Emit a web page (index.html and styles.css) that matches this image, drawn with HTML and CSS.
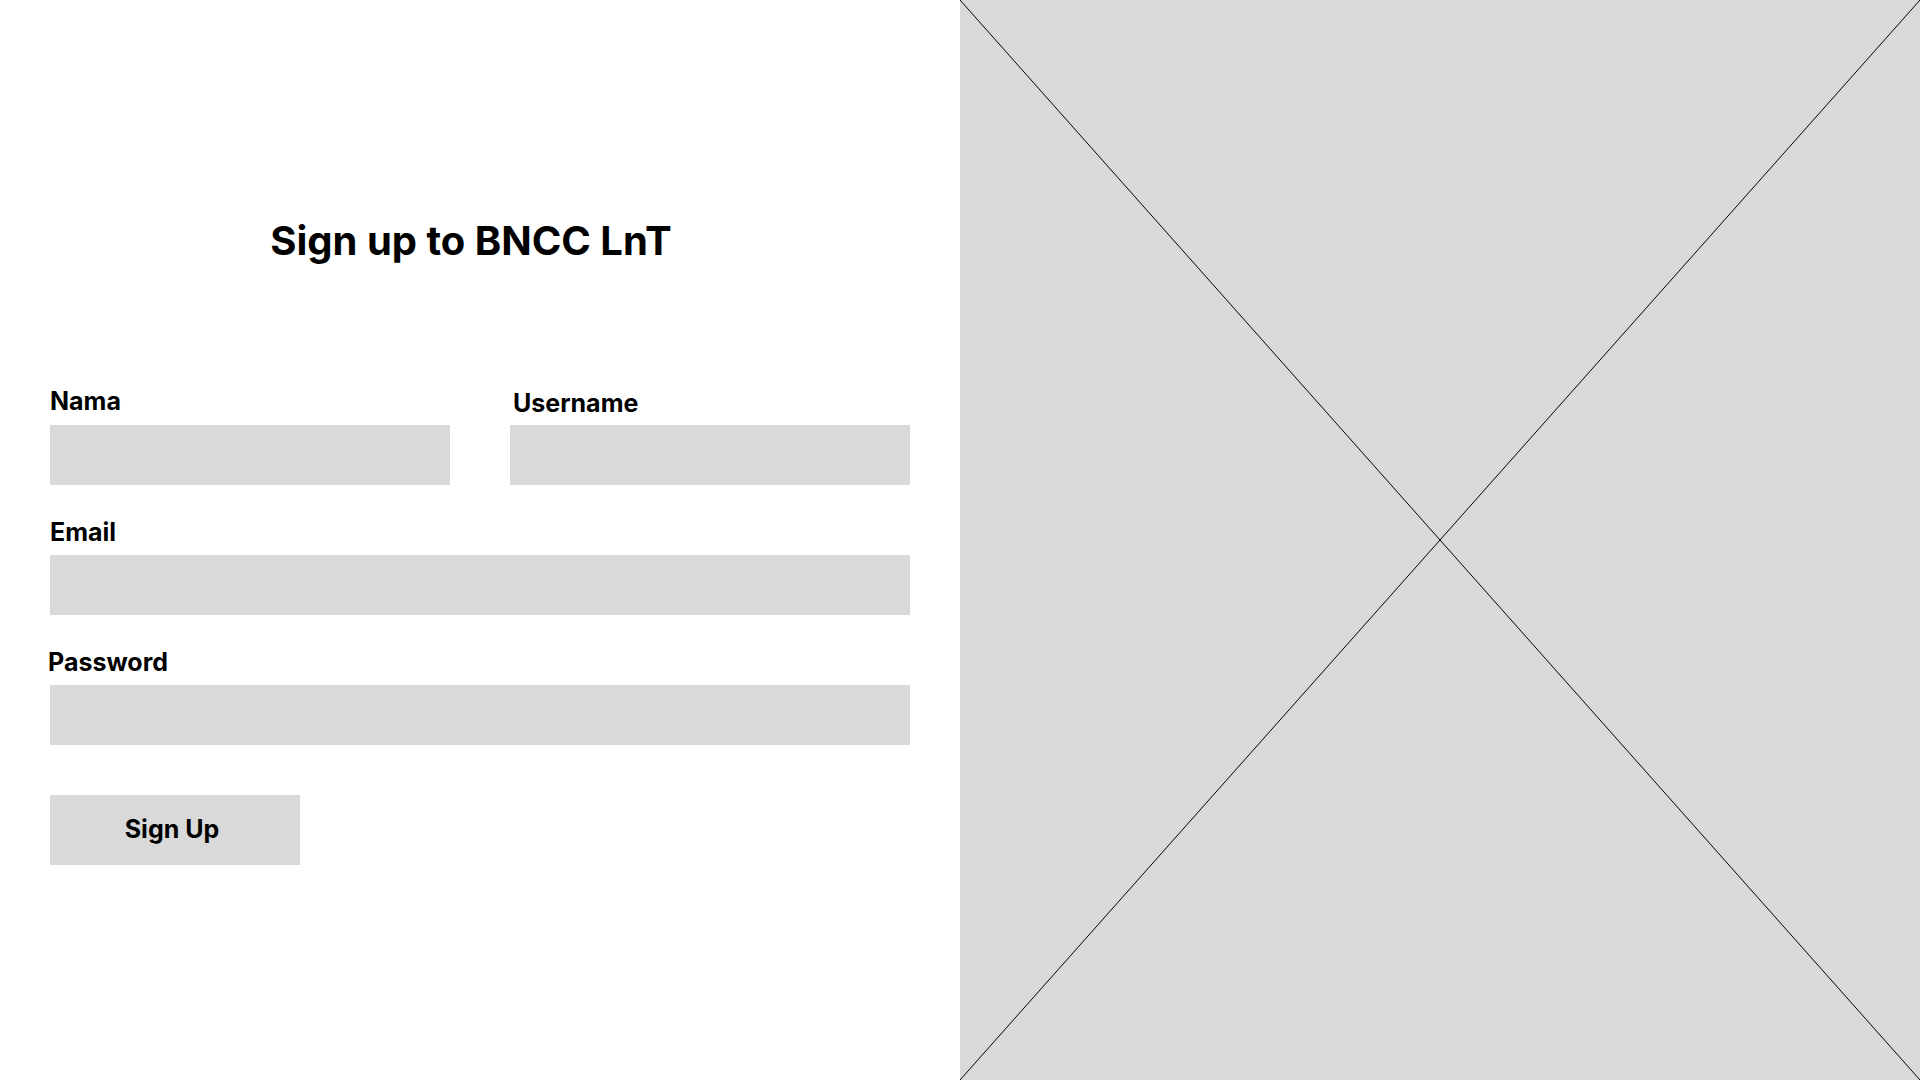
FILE: index.html
```html
<!DOCTYPE html>
<html lang="id">
<head>
<meta charset="utf-8">
<title>Sign up to BNCC LnT</title>
<link rel="stylesheet" href="styles.css">
</head>
<body>
<div class="page">
  <main class="left">
    <h1 class="title">Sign up to BNCC LnT</h1>
    <form class="form">
      <div class="row">
        <div class="field">
          <label class="label">Nama</label>
          <div class="input"></div>
        </div>
        <div class="field">
          <label class="label label-user">Username</label>
          <div class="input"></div>
        </div>
      </div>
      <div class="field field-wide">
        <label class="label">Email</label>
        <div class="input"></div>
      </div>
      <div class="field field-wide">
        <label class="label label-pass">Password</label>
        <div class="input"></div>
      </div>
      <button type="button" class="btn">Sign Up</button>
    </form>
  </main>
  <aside class="right">
    <svg class="cross" viewBox="0 0 960 1080" preserveAspectRatio="none">
      <line x1="0" y1="0" x2="960" y2="1080" stroke="#000" stroke-width="1"/>
      <line x1="960" y1="0" x2="0" y2="1080" stroke="#000" stroke-width="1"/>
    </svg>
  </aside>
</div>
</body>
</html>
```
FILE: styles.css
```css
html, body {
  margin: 0;
  padding: 0;
  background: #ffffff;
}
body {
  font-family: Inter, "Noto Sans", "Liberation Sans", sans-serif;
  color: #000;
}
.page {
  display: flex;
  width: 1920px;
  height: 1080px;
}
.left {
  width: 960px;
  box-sizing: border-box;
  padding: 217px 50px 0 50px;
}
.title {
  margin: 0;
  font-size: 40px;
  line-height: 48px;
  font-weight: 700;
  text-align: center;
  padding-right: 18px;
}
.form {
  margin-top: 121px;
  width: 860px;
}
.row {
  display: grid;
  grid-template-columns: 400px 400px;
  column-gap: 60px;
}
.field {
  display: flex;
  flex-direction: column;
}
.field-wide {
  margin-top: 32px;
}
.label {
  display: block;
  font-size: 25px;
  line-height: 29px;
  font-weight: 700;
  height: 29px;
  margin-top: 1px;
  margin-bottom: 9px;
}
.field-wide .label {
  margin-bottom: 8px;
}
.label-user {
  padding-left: 3px;
  margin-top: 3px;
  margin-bottom: 7px;
}
.field-wide .label-pass {
  margin-left: -2px;
}
.input {
  height: 60px;
  background: #d9d9d9;
}
.btn {
  display: block;
  margin-top: 50px;
  width: 250px;
  height: 70px;
  border: none;
  padding: 0 6px 2px 0;
  background: #d9d9d9;
  font-family: Inter, "Noto Sans", "Liberation Sans", sans-serif;
  font-size: 25px;
  font-weight: 700;
  color: #000;
  text-align: center;
}
.right {
  width: 960px;
  height: 1080px;
  background: #d9d9d9;
}
.cross {
  display: block;
  width: 100%;
  height: 100%;
}
```
